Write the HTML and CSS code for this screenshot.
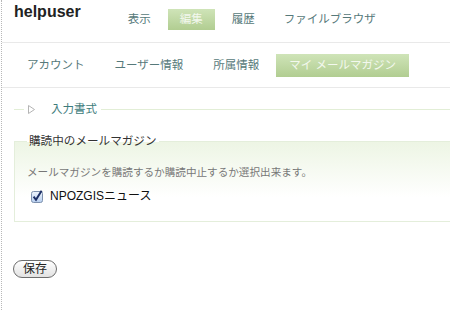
FILE: index.html
```html
<!DOCTYPE html>
<html lang="ja">

<head>
  <meta charset="UTF-8">
  <title>helpuser</title>
  <link rel="stylesheet" href="styles.css">
</head>

<body>
  <div class="page">
    <header class="header">
      <h1 class="site-title">helpuser</h1>
      <ul class="tabs primary">
        <li><a href="#">表示</a></li>
        <li class="active"><a href="#">編集</a></li>
        <li><a href="#">履歴</a></li>
        <li><a href="#">ファイルブラウザ</a></li>
      </ul>
    </header>

    <ul class="tabs secondary">
      <li><a href="#">アカウント</a></li>
      <li><a href="#">ユーザー情報</a></li>
      <li><a href="#">所属情報</a></li>
      <li class="active"><a href="#">マイ メールマガジン</a></li>
    </ul>

    <form class="user-form">
      <fieldset class="collapsed">
        <legend>
          <svg class="arrow" width="7" height="9" viewBox="0 0 7 9">
            <polygon points="0.5,0.5 6.5,4.5 0.5,8.5" fill="none" stroke="#b4b4b4" stroke-width="1" />
          </svg>入力書式
        </legend>
      </fieldset>

      <fieldset class="mail">
        <legend>購読中のメールマガジン</legend>
        <p class="description">メールマガジンを購読するか購読中止するか選択出来ます。</p>
        <label class="option">
          <input type="checkbox" checked>
          <svg class="check" width="12" height="13" viewBox="0 0 12 13">
            <defs>
              <linearGradient id="cb" x1="0" y1="0" x2="0" y2="1">
                <stop offset="0" stop-color="#eef4fc" />
                <stop offset="1" stop-color="#b6cdee" />
              </linearGradient>
            </defs>
            <rect x="0.5" y="1.5" width="11" height="11" rx="2" fill="url(#cb)" stroke="#7d90ad" />
            <path d="M2.6 6.6 L5 9.8 L10.6 0.8" fill="none" stroke="#1d2f66" stroke-width="2" />
          </svg>
          <span>NPOZGISニュース</span>
        </label>
      </fieldset>

      <button type="submit" class="save">保存</button>
    </form>
  </div>
</body>

</html>
```

FILE: styles.css
```css
body {
  margin: 0;
  font-family: "Liberation Sans", "Noto Sans CJK JP", sans-serif;
  background-color: #ffffff;
  color: #222;
  overflow: hidden;
}

.page {
  margin-left: 1px;
  min-height: 310px;
  border-left: 1px dotted #b8b8b8;
}

.header {
  display: flex;
  align-items: flex-start;
  height: 42px;
  border-bottom: 1px solid #e9e9e9;
}

.site-title {
  margin: 3px 0 0 12px;
  font-size: 16px;
  line-height: 18px;
  font-weight: bold;
  color: #222;
}

.tabs {
  display: flex;
  list-style: none;
  margin: 0;
  padding: 0;
}

.tabs a {
  display: block;
  color: #56797a;
  font-size: 11.5px;
  text-decoration: none;
}

.tabs .active a {
  background: linear-gradient(#cfe4b8, #b1cd91);
  color: #f3f8ee;
}

.primary {
  margin: 9px 0 0 35px;
  gap: 5px;
}

.primary a {
  padding: 0 12px;
  line-height: 21px;
}

.secondary {
  padding: 11px 0 10px 12px;
  gap: 4px;
  border-bottom: 1px solid #e9e9e9;
}

.secondary a {
  padding: 0 13px;
  line-height: 23px;
}

.user-form {
  padding-left: 12px;
}

fieldset {
  margin: 0;
  min-width: 0;
}

legend {
  line-height: 14px;
}

.collapsed {
  margin-top: 14px;
  padding: 0 0 0 10px;
  border: 0;
  border-top: 1px solid #e2eed6;
}

.collapsed legend {
  padding: 0 4px;
  font-size: 11.5px;
  color: #3d7c7c;
}

.arrow {
  margin-right: 16px;
  vertical-align: -1px;
}

.mail {
  margin-top: 18px;
  padding: 17px 12px 17px;
  border: 1px solid #e4eedb;
  border-right: 0;
  background: linear-gradient(#edf5e4, #ffffff 55px);
}

.mail legend {
  padding: 0 2px;
  font-size: 11.6px;
  color: #333;
}

.description {
  margin: 0;
  font-size: 10.6px;
  line-height: 14px;
  color: #777;
}

.option {
  display: flex;
  align-items: center;
  gap: 7px;
  margin-top: 9px;
  padding-left: 4px;
  font-size: 12px;
  line-height: 16px;
  color: #111;
}

.option input {
  display: none;
}

.save {
  display: block;
  margin: 38px 0 0 -1px;
  width: 44px;
  height: 18px;
  padding: 0;
  border: 1px solid #6d6d6d;
  border-radius: 9px;
  background: linear-gradient(#ffffff, #e2e2e2);
  font-family: inherit;
  font-size: 12px;
  line-height: 16px;
  color: #222;
}
```
